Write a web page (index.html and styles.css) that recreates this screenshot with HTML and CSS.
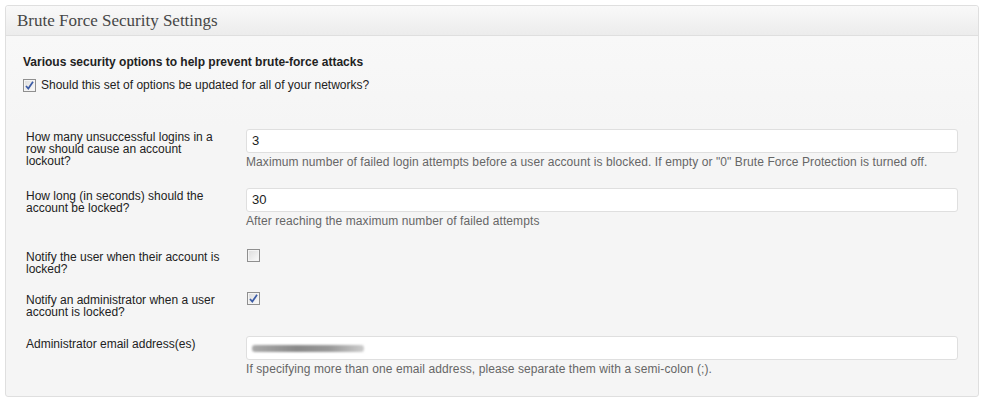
FILE: index.html
```html
<!DOCTYPE html>
<html lang="en">
<head>
    <meta charset="UTF-8">
    <title>Brute Force Security Settings</title>
    <link rel="stylesheet" href="styles.css">
</head>
<body>
    <div class="postbox">
        <h3 class="hndle">Brute Force Security Settings</h3>
        <div class="inside">
            <p class="intro">Various security options to help prevent brute-force attacks</p>
            <label class="network">
                <span class="cb checked"><svg viewBox="0 0 11 11"><path d="M2 6 L4.3 8.6 L9 1.8" fill="none" stroke="#3b5ba6" stroke-width="1.7"/></svg></span>
                Should this set of options be updated for all of your networks?
            </label>

            <div class="form-table">
                <div class="row row-text">
                    <div class="th">How many unsuccessful logins in a row should cause an account lockout?</div>
                    <div class="td">
                        <div class="field">3</div>
                        <p class="description">Maximum number of failed login attempts before a user account is blocked. If empty or "0" Brute Force Protection is turned off.</p>
                    </div>
                </div>
                <div class="row row-text">
                    <div class="th">How long (in seconds) should the account be locked?</div>
                    <div class="td">
                        <div class="field">30</div>
                        <p class="description">After reaching the maximum number of failed attempts</p>
                    </div>
                </div>
                <div class="row row-check">
                    <div class="th">Notify the user when their account is locked?</div>
                    <div class="td">
                        <span class="cb"></span>
                    </div>
                </div>
                <div class="row row-check">
                    <div class="th">Notify an administrator when a user account is locked?</div>
                    <div class="td">
                        <span class="cb checked"><svg viewBox="0 0 11 11"><path d="M2 6 L4.3 8.6 L9 1.8" fill="none" stroke="#3b5ba6" stroke-width="1.7"/></svg></span>
                    </div>
                </div>
                <div class="row row-text last">
                    <div class="th">Administrator email address(es)</div>
                    <div class="td">
                        <div class="field"><span class="blurred"></span></div>
                        <p class="description">If specifying more than one email address, please separate them with a semi-colon (;).</p>
                    </div>
                </div>
            </div>
        </div>
    </div>
</body>
</html>
```

FILE: styles.css
```css
body {
    margin: 0;
    padding: 5px 7px 10px 5px;
    background: #fff;
    font-family: "Liberation Sans", Arial, sans-serif;
    font-size: 12px;
    color: #333;
}
.postbox {
    border: 1px solid #dfdfdf;
    border-radius: 3px;
    background: linear-gradient(#f9f9f9, #f5f5f5 120px);
    box-shadow: 0 1px 0 #fff inset;
}
.hndle {
    margin: 0;
    height: 29px;
    line-height: 29px;
    padding: 0 11px;
    border-bottom: 1px solid #dfdfdf;
    background: linear-gradient(#f9f9f9, #ececec);
    font-family: "Liberation Serif", Georgia, serif;
    font-weight: normal;
    font-size: 17px;
    color: #464646;
    border-radius: 3px 3px 0 0;
}
.inside {
    padding: 18px 17px 20px;
}
.intro {
    margin: 0;
    font-weight: bold;
    color: #222;
    line-height: 16px;
}
.network {
    display: flex;
    align-items: center;
    gap: 5px;
    margin-top: 8px;
    color: #222;
    line-height: 14px;
}
.cb {
    display: inline-block;
    box-sizing: border-box;
    width: 13px;
    height: 13px;
    border: 1px solid #8f8f8f;
    background: linear-gradient(135deg, #dcdcdc, #fbfbfb);
    box-shadow: inset 0 0 0 1px #f4f4f4;
    padding: 0;
}
.cb svg {
    display: block;
    width: 11px;
    height: 11px;
}
.form-table {
    margin-top: 37px;
}
.row {
    display: flex;
}
.th {
    width: 196px;
    padding-left: 3px;
    margin-right: 24px;
    color: #222;
    line-height: 12px;
}
.td {
    flex: 1;
    margin-right: 3px;
}
.row-text .th {
    padding-top: 2px;
}
.row + .row {
    margin-top: 19px;
}
.row-text + .row-check {
    margin-top: 21px;
}
.row-check + .row-check {
    margin-top: 17px;
}
.row-check + .row-text {
    margin-top: 18px;
}
.row-check .th {
    padding-top: 2px;
}
.row-check .td {
    padding-left: 1px;
}
.row-check {
    min-height: 24px;
}
.field {
    box-sizing: border-box;
    height: 24px;
    border: 1px solid #dfdfdf;
    border-radius: 3px;
    background: #fff;
    padding: 0 5px;
    font-size: 13px;
    line-height: 22px;
    color: #222;
    display: flex;
    align-items: center;
}
.blurred {
    display: block;
    width: 112px;
    height: 7px;
    border-radius: 3px;
    background: linear-gradient(90deg, #aaa, #888 40%, #999 70%, #ccc);
    filter: blur(1.2px);
}
.description {
    margin: 2px 0 0;
    color: #666;
    line-height: 14px;
    letter-spacing: 0.09px;
}
```
